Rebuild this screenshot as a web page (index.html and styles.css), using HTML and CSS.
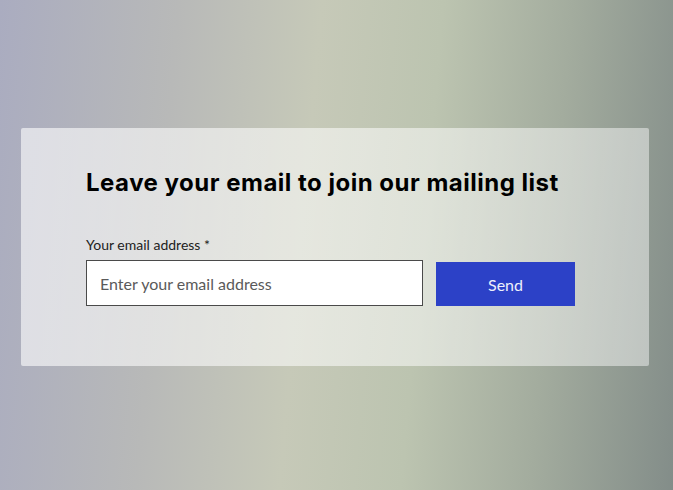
FILE: index.html
```html
<!DOCTYPE html>
<html>
<head>
<meta charset="utf-8">
<link rel="stylesheet" href="styles.css">
</head>
<body>
<div class="page">
  <form class="card" onsubmit="return false">
    <h2 class="title">Leave your email to join our mailing list</h2>
    <label class="label" for="email">Your email address *</label>
    <div class="row">
      <input id="email" class="input" type="text" placeholder="Enter your email address">
      <button class="send" type="submit">Send</button>
    </div>
  </form>
</div>
</body>
</html>
```
FILE: styles.css
```css
html, body {
  margin: 0;
  padding: 0;
  height: 100%;
}
.page {
  height: 490px;
  box-sizing: border-box;
  padding: 128px 24px 0 21px;
  background: linear-gradient(95deg, #aaacc0 0%, #b8b9b8 25%, #c6c9b8 45%, #bcc4b0 62%, #a3ac9e 80%, #838d89 100%);
}
.card {
  width: 628px;
  height: 238px;
  box-sizing: border-box;
  padding: 40px 65px 0 65px;
  border-radius: 2px;
  background: linear-gradient(95deg, rgba(255,255,255,0.6), rgba(255,255,255,0.55) 45%, rgba(255,255,255,0.45));
  display: flex;
  flex-direction: column;
  font-family: Lato, "Open Sans", sans-serif;
}
.title {
  margin: 0;
  font-family: Inter, sans-serif;
  font-weight: 700;
  font-size: 24px;
  letter-spacing: 0.5px;
  line-height: 30px;
  color: #000;
}
.label {
  margin-top: 38px;
  font-size: 14px;
  line-height: 18px;
  color: #222;
}
.row {
  margin-top: 6px;
  display: flex;
  align-items: flex-end;
  gap: 13px;
}
.input {
  width: 337px;
  height: 46px;
  box-sizing: border-box;
  border: 1px solid #4a4a4a;
  background: #fff;
  padding: 0 13px;
  font-family: Lato, sans-serif;
  font-size: 16px;
  color: #333;
  outline: none;
  margin: 0;
}
.input::placeholder {
  color: #5a5a5a;
}
.send {
  width: 139px;
  height: 44px;
  border: none;
  margin: 0;
  background: #2c41c7;
  color: #eef0fb;
  font-family: Lato, sans-serif;
  font-weight: 400;
  font-size: 16px;
  cursor: pointer;
}
```
